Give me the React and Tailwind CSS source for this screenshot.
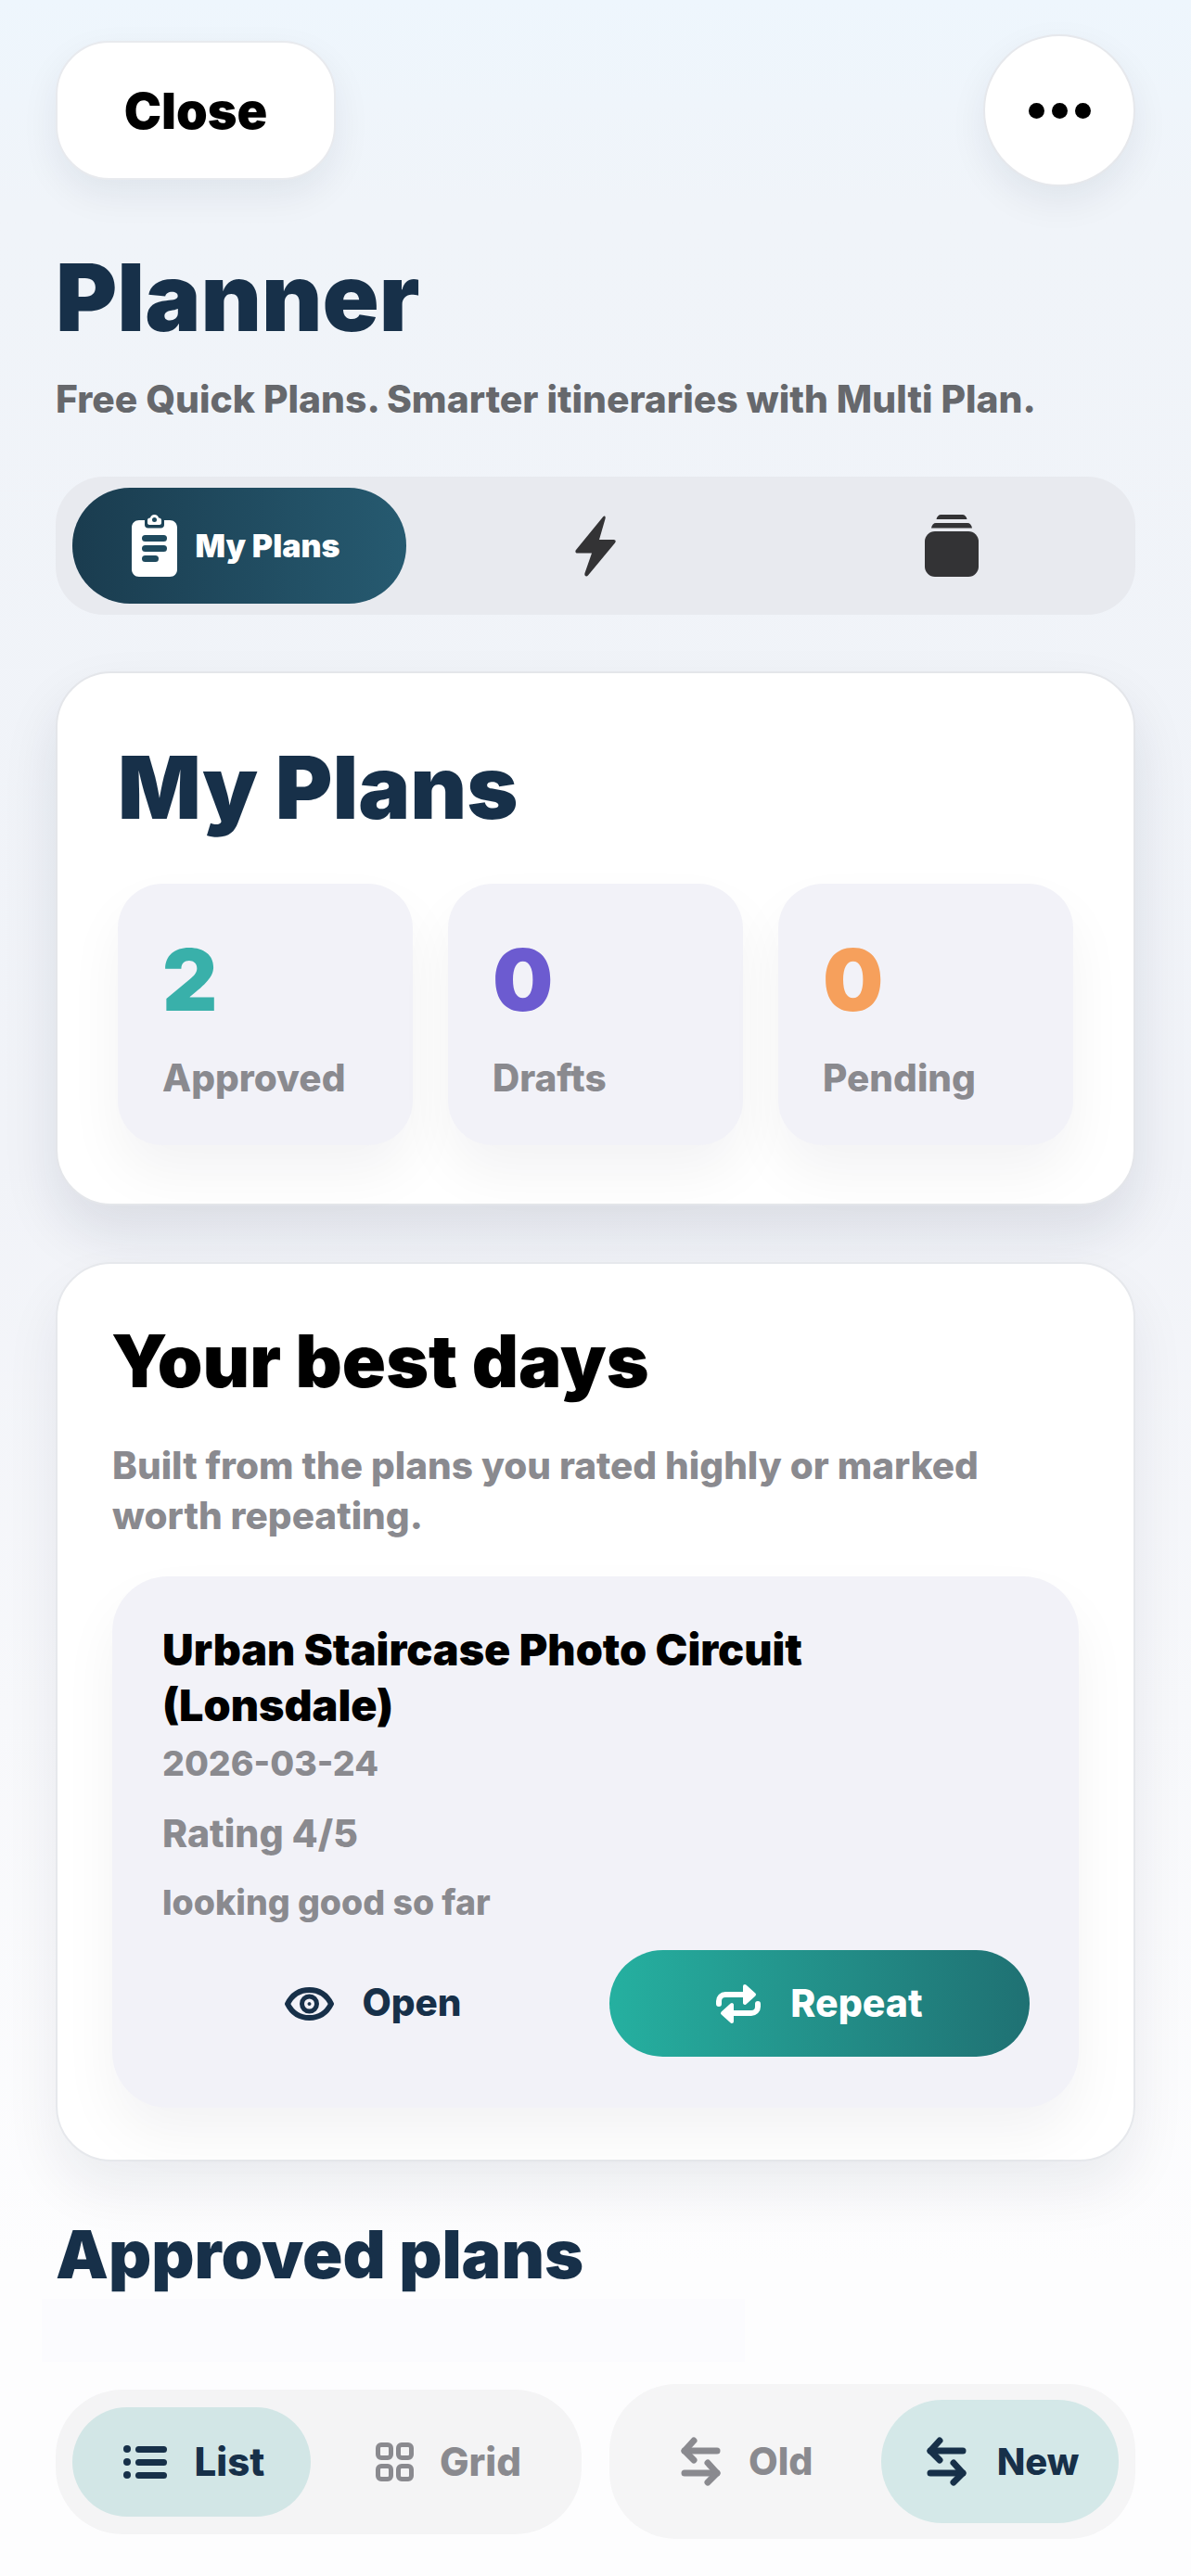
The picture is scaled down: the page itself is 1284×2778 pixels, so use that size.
import React from "react";

const font = { fontFamily: "Inter, 'Liberation Sans', sans-serif" };

const ClipboardIcon = () => (
  <svg width="49" height="67" viewBox="0 0 49 67" fill="none">
    <path
      d="M8 6h6v5c0 2 1.500 3.500 3.500 3.500h14c2 0 3.500-1.500 3.500-3.500V6h6c4.500 0 8 3 8 8v45c0 4.500-3 8-8 8H8c-4.500 0-8-3.500-8-8V14c0-5 3.500-8 8-8z"
      fill="#fff"
    />
    <path
      d="M17 6c0-1.500 1-2.500 2.500-2.500h0.500C20.500 1.500 22 0 24.500 0S28.500 1.500 29 3.500h0.500C31 3.500 32 4.500 32 6v3c0 1-1 2-2 2H19c-1 0-2-1-2-2z"
      fill="#fff"
    />
    <circle cx="24.500" cy="5.500" r="2.500" fill="#1f4a5e" />
    <rect x="11" y="22" width="27" height="7" rx="3.500" fill="#1f4a5e" />
    <rect x="11" y="33" width="27" height="7" rx="3.500" fill="#1f4a5e" />
    <rect x="11" y="44" width="18" height="7" rx="3.500" fill="#1f4a5e" />
  </svg>
);

const BoltIcon = () => (
  <svg width="44" height="66" viewBox="0 0 44 66" fill="#333335">
    <path d="M30 1.500 1 37c-1.300 1.700-.5 3.500 1.500 3.500H18L10.500 62c-.9 3 1.500 4.800 3.700 2.300L43 29.500c1.400-1.700.6-3.500-1.500-3.500H26l6.500-22.500C33.300 0.800 31.700-.5 30 1.500z" />
  </svg>
);

const StackIcon = () => (
  <svg width="58" height="67" viewBox="0 0 58 67" fill="#333335">
    <path d="M12.500 5c.5-3 2.500-5 5-5h23c2.500 0 4.500 2 5 5h-33z" />
    <path d="M7 14.500c.5-3.500 2.500-5.500 5-5.500h34c2.500 0 4.500 2 5 5.500H7z" />
    <rect x="0" y="18" width="58" height="49" rx="11" />
  </svg>
);

const EyeIcon = () => (
  <svg width="53" height="36" viewBox="0 0 53 36" fill="none" stroke="#173049" strokeWidth="6">
    <path d="M3 18C8 8 16 3 26.500 3S45 8 50 18c-5 10-13 15-23.500 15S8 28 3 18z" strokeLinejoin="round" />
    <circle cx="26.500" cy="18" r="8" strokeWidth="5" />
    <circle cx="26.500" cy="18" r="1.500" fill="#173049" strokeWidth="1" />
  </svg>
);

const RepeatIcon = () => (
  <svg width="48" height="44" viewBox="0 0 48 44" fill="none" stroke="#fff" strokeWidth="6" strokeLinecap="round" strokeLinejoin="round">
    <path d="M3 22v-3c0-4 3-7 7-7h22" />
    <path d="M31 3l10 9-10 9z" fill="#fff" strokeWidth="4" />
    <path d="M45 22v3c0 4-3 7-7 7H16" />
    <path d="M17 41 7 32l10-9z" fill="#fff" strokeWidth="4" />
  </svg>
);

const ListIcon = () => (
  <svg width="47" height="36" viewBox="0 0 47 36" fill="#173049">
    <circle cx="4" cy="4" r="4" />
    <circle cx="4" cy="18" r="4" />
    <circle cx="4" cy="32" r="4" />
    <rect x="13" y="1" width="34" height="7" rx="3.500" />
    <rect x="13" y="15" width="34" height="7" rx="3.500" />
    <rect x="13" y="29" width="34" height="7" rx="3.500" />
  </svg>
);

const GridIcon = () => (
  <svg width="41" height="42" viewBox="0 0 41 42" fill="none" stroke="#8a8a8f" strokeWidth="5">
    <rect x="2.500" y="2.500" width="14" height="14" rx="3.500" />
    <rect x="24.500" y="2.500" width="14" height="14" rx="3.500" />
    <rect x="2.500" y="25.500" width="14" height="14" rx="3.500" />
    <rect x="24.500" y="25.500" width="14" height="14" rx="3.500" />
  </svg>
);

const SwapIcon = ({ color }) => (
  <svg width="43" height="53" viewBox="0 0 43 53" fill="none" stroke={color} strokeWidth="7" strokeLinecap="round" strokeLinejoin="round">
    <path d="M4 15h35" />
    <path d="M14 4 4 15l10 10" />
    <path d="M4 39h35" />
    <path d="M29 28l10 11-10 10" />
  </svg>
);

const StatCard = ({ value, label, color }) => (
  <div className="h-[282px] rounded-[48px] bg-[#f2f2f8] pl-[48px] pt-[49px] shadow-[0_30px_60px_rgba(20,20,40,0.05)]">
    <div className={`text-[92px] leading-[110px] font-black ${color}`}>{value}</div>
    <div className="mt-[27px] text-[40.5px] leading-[48px] font-extrabold text-[#8a8a8f]">{label}</div>
  </div>
);

const App = () => {
  return (
    <div
      style={font}
      className="h-[2778px] overflow-hidden bg-[linear-gradient(180deg,#eef6fd_0%,#f0f4f9_8%,#f1f3f8_45%,#fdfdfe_88%)] px-[60px]"
    >
      {/* Top bar */}
      <div className="flex items-center justify-between pt-[37px]">
        <button className="flex h-[150px] w-[302px] items-center justify-center rounded-[58px] border-2 border-[#e8eaee] bg-white text-[54px] font-black text-black shadow-[0_16px_40px_rgba(20,30,60,0.07)]">
          Close
        </button>
        <button className="flex h-[164px] w-[164px] items-center justify-center gap-[8px] rounded-full border-2 border-[#e6e8ec] bg-white shadow-[0_16px_40px_rgba(20,30,60,0.07)]">
          <span className="h-[17px] w-[17px] rounded-full bg-black" />
          <span className="h-[17px] w-[17px] rounded-full bg-black" />
          <span className="h-[17px] w-[17px] rounded-full bg-black" />
        </button>
      </div>

      <h1 className="mt-[61px] text-[101px] leading-[116px] font-black text-[#173049]">Planner</h1>
      <p className="mt-[29px] text-[40.8px] leading-[46px] font-extrabold whitespace-nowrap text-[#66686c]">
        Free Quick Plans. Smarter itineraries with Multi Plan.
      </p>

      {/* Tabs */}
      <div className="mt-[61px] grid h-[149px] grid-cols-3 items-center gap-[24px] rounded-[52px] bg-[#e8eaef] px-[18px]">
        <div className="flex h-[125px] items-center justify-center gap-[19px] rounded-[62px] bg-gradient-to-r from-[#1a3c4f] to-[#265a70] pr-[7px]">
          <ClipboardIcon />
          <span className="text-[34px] font-black text-white">My Plans</span>
        </div>
        <div className="flex justify-center">
          <BoltIcon />
        </div>
        <div className="flex justify-center">
          <StackIcon />
        </div>
      </div>

      {/* My Plans card */}
      <div className="mt-[61px] h-[576px] rounded-[60px] border-2 border-[#e4e6ea] bg-white px-[65px] pt-[70px] shadow-[0_30px_60px_rgba(20,30,60,0.1)]">
        <h2 className="text-[94px] leading-[106px] font-black text-[#173049]">My Plans</h2>
        <div className="mt-[51px] grid grid-cols-3 gap-[38px]">
          <StatCard value="2" label="Approved" color="text-[#39b0aa]" />
          <StatCard value="0" label="Drafts" color="text-[#6c5bd0]" />
          <StatCard value="0" label="Pending" color="text-[#f6a05c]" />
        </div>
      </div>

      {/* Best days card */}
      <div className="mt-[61px] h-[970px] rounded-[60px] border-2 border-[#e6e8ec] bg-white px-[59px] pt-[60px] shadow-[0_30px_60px_rgba(20,30,60,0.07)]">
        <h2 className="-ml-[1px] text-[78px] leading-[90px] font-black text-black">Your best days</h2>
        <p className="mt-[41px] text-[40.5px] leading-[53.5px] font-extrabold text-[#8a8a8f]">
          Built from the plans you rated highly or marked
          <br />
          worth repeating.
        </p>

        <div className="mt-[39px] h-[573px] rounded-[60px] bg-[#f2f2f8] pl-[55px] pr-[53px] pt-[49px] shadow-[0_30px_60px_rgba(20,20,40,0.05)]">
          <h3 className="-ml-[1px] text-[46.7px] leading-[60px] font-black text-black">
            Urban Staircase Photo Circuit
            <br />
            (Lonsdale)
          </h3>
          <div className="mt-[11px] -ml-[1px] text-[37.5px] leading-[44px] font-extrabold text-[#8a8a8f]">2026-03-24</div>
          <div className="mt-[30px] -ml-[1px] text-[41px] leading-[46px] font-extrabold text-[#8a8a8f]">Rating 4/5</div>
          <div className="mt-[30px] -ml-[1px] text-[37.5px] leading-[44px] font-extrabold text-[#8a8a8f]">looking good so far</div>
          <div className="mt-[29px] grid grid-cols-2 gap-[28px]">
            <button className="flex h-[115px] items-center justify-center gap-[30px] text-[40.5px] font-extrabold text-[#173049]">
              <EyeIcon />
              Open
            </button>
            <button className="flex h-[115px] items-center justify-center gap-[32px] rounded-[58px] bg-gradient-to-r from-[#25b0a0] to-[#1f7173] text-[41px] font-extrabold text-white">
              <RepeatIcon />
              Repeat
            </button>
          </div>
        </div>
      </div>

      {/* Approved plans */}
      <h2 className="mt-[59px] text-[71.7px] leading-[82px] font-black text-[#173049]">Approved plans</h2>
      <div className="-ml-[15px] mt-[7px] h-[68px] w-[758px] bg-[#fbfbfe]" />

      <div className="mt-[24px] grid grid-cols-2 items-center gap-[30px]">
        <div className="flex h-[156px] items-center justify-between rounded-[72px] bg-[#f4f4f5] pl-[18px] pr-[65px]">
          <div className="flex h-[118px] w-[257px] items-center justify-center gap-[30px] rounded-[59px] bg-[#d2e6e6] pl-[5px] text-[42px] font-extrabold text-[#173049]">
            <ListIcon />
            List
          </div>
          <div className="flex items-center gap-[28px] text-[42px] font-extrabold text-[#8a8a8f]">
            <GridIcon />
            Grid
          </div>
        </div>
        <div className="flex h-[167px] items-center justify-between rounded-[72px] bg-[#f5f5f6] pr-[18px]">
          <div className="flex items-center gap-[30px] pl-[77px] text-[41px] font-extrabold text-[#8a8a8f]">
            <SwapIcon color="#8a8a8f" />
            Old
          </div>
          <div className="flex h-[133px] w-[256px] items-center justify-center gap-[33px] rounded-[66px] bg-[#d4e8e8] pl-[6px] text-[40px] font-extrabold text-[#173049]">
            <SwapIcon color="#173049" />
            New
          </div>
        </div>
      </div>
    </div>
  );
};

export default App;
